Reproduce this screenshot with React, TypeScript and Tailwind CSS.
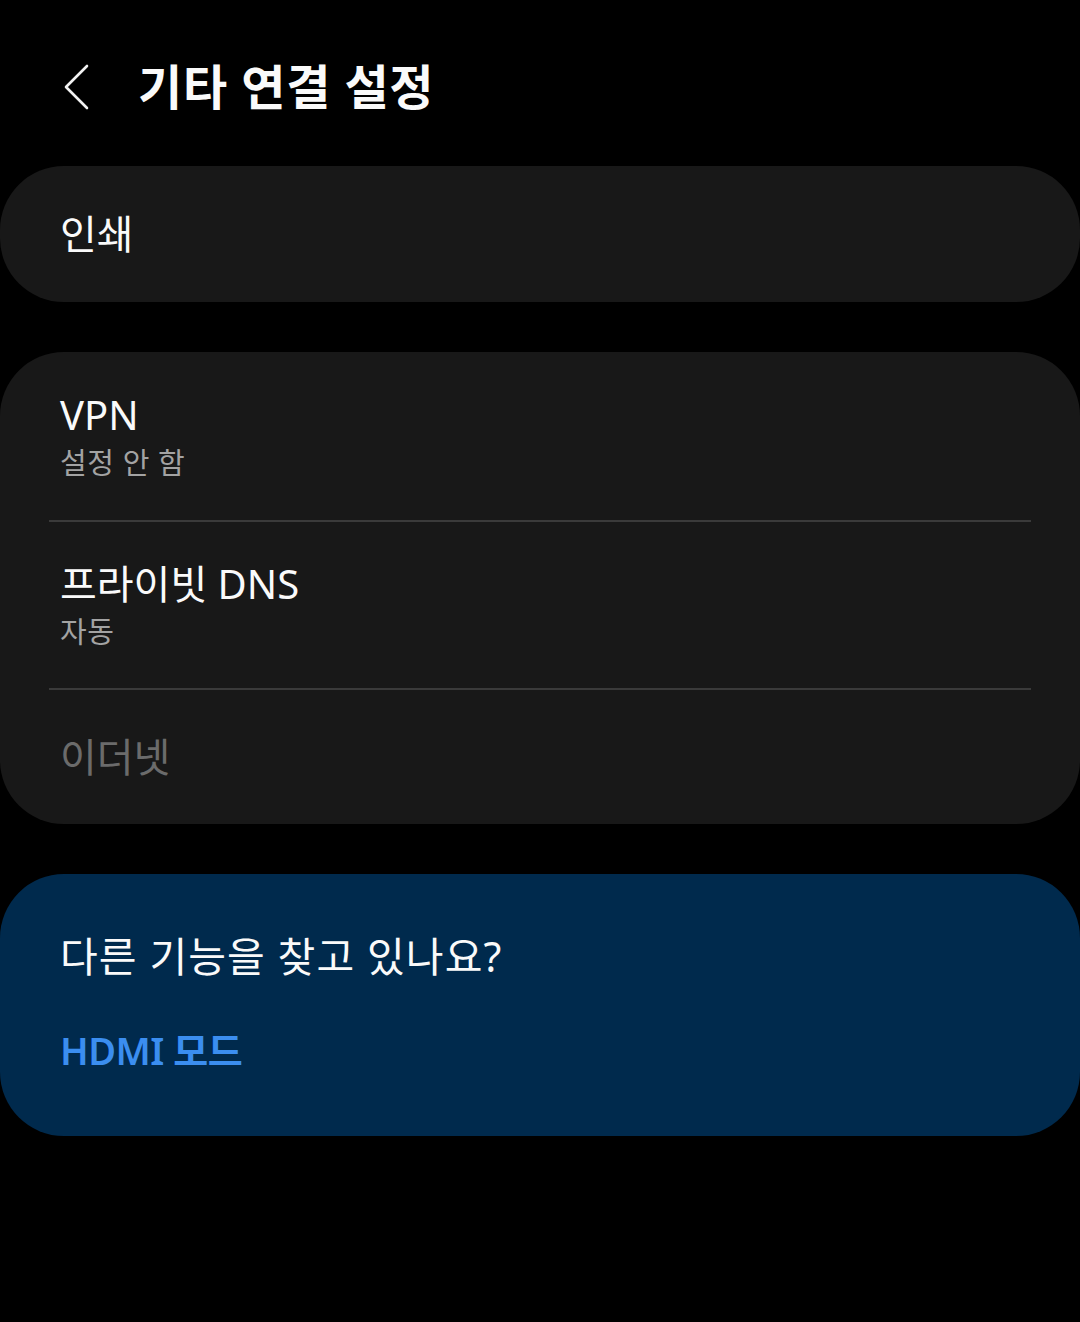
import React from 'react'

// --- Settings rows ---
type RowProps = {
  title: string
  summary?: string
  disabled?: boolean
  className?: string
}

function Row({ title, summary, disabled, className }: RowProps) {
  return (
    <div className={`flex flex-col justify-center px-[60px] ${className ?? ''}`}>
      <div
        className={`text-[40px] leading-[48px] ${disabled ? 'text-[#6b6b6b]' : 'text-[#fafafa]'}`}
      >
        {title}
      </div>
      {summary && (
        <div className="mt-[5px] text-[29px] leading-[38px] tracking-[0.6px] text-[#a3a3a3]">{summary}</div>
      )}
    </div>
  )
}

function Divider() {
  return <div className="mx-[49px] h-[2px] bg-[#3a3a3a]" />
}

export default function App() {
  return (
    <div
      className="min-h-[1322px] w-[1080px] bg-black"
      style={{ fontFamily: '"Noto Sans", "Noto Sans CJK KR", sans-serif' }}
    >
      {/* header */}
      <div className="flex h-[166px] items-center pt-[8px]">
        <button className="ml-[60px] flex h-[48px] w-[32px] items-center justify-center">
          <svg width="30" height="46" viewBox="0 0 30 46" fill="none">
            <path d="M26 2 L5 23 L26 44" stroke="#f2f2f2" strokeWidth="2.6" strokeLinecap="round" strokeLinejoin="round" />
          </svg>
        </button>
        <h1 className="ml-[46px] text-[48px] font-bold leading-none tracking-[0.8px] text-[#fafafa]">
          기타 연결 설정
        </h1>
      </div>

      {/* 인쇄 */}
      <div className="rounded-[64px] bg-[#181818]">
        <Row title="인쇄" className="h-[136px]" />
      </div>

      {/* network */}
      <div className="mt-[50px] rounded-[64px] bg-[#181818]">
        <Row title="VPN" summary="설정 안 함" className="h-[168px]" />
        <Divider />
        <Row title="프라이빗 DNS" summary="자동" className="h-[166px]" />
        <Divider />
        <Row title="이더넷" disabled className="h-[134px]" />
      </div>

      {/* suggestions */}
      <div className="mt-[50px] flex h-[262px] flex-col justify-center rounded-[64px] bg-[#002a4d] px-[60px] pb-[4px]">
        <div className="text-[41px] leading-[48px] tracking-[1.1px] text-[#fafafa]">다른 기능을 찾고 있나요?</div>
        <div className="mt-[46px] text-[38px] font-semibold leading-[48px] tracking-[-0.5px] text-[#3b8ef0]">HDMI 모드</div>
      </div>
    </div>
  )
}
